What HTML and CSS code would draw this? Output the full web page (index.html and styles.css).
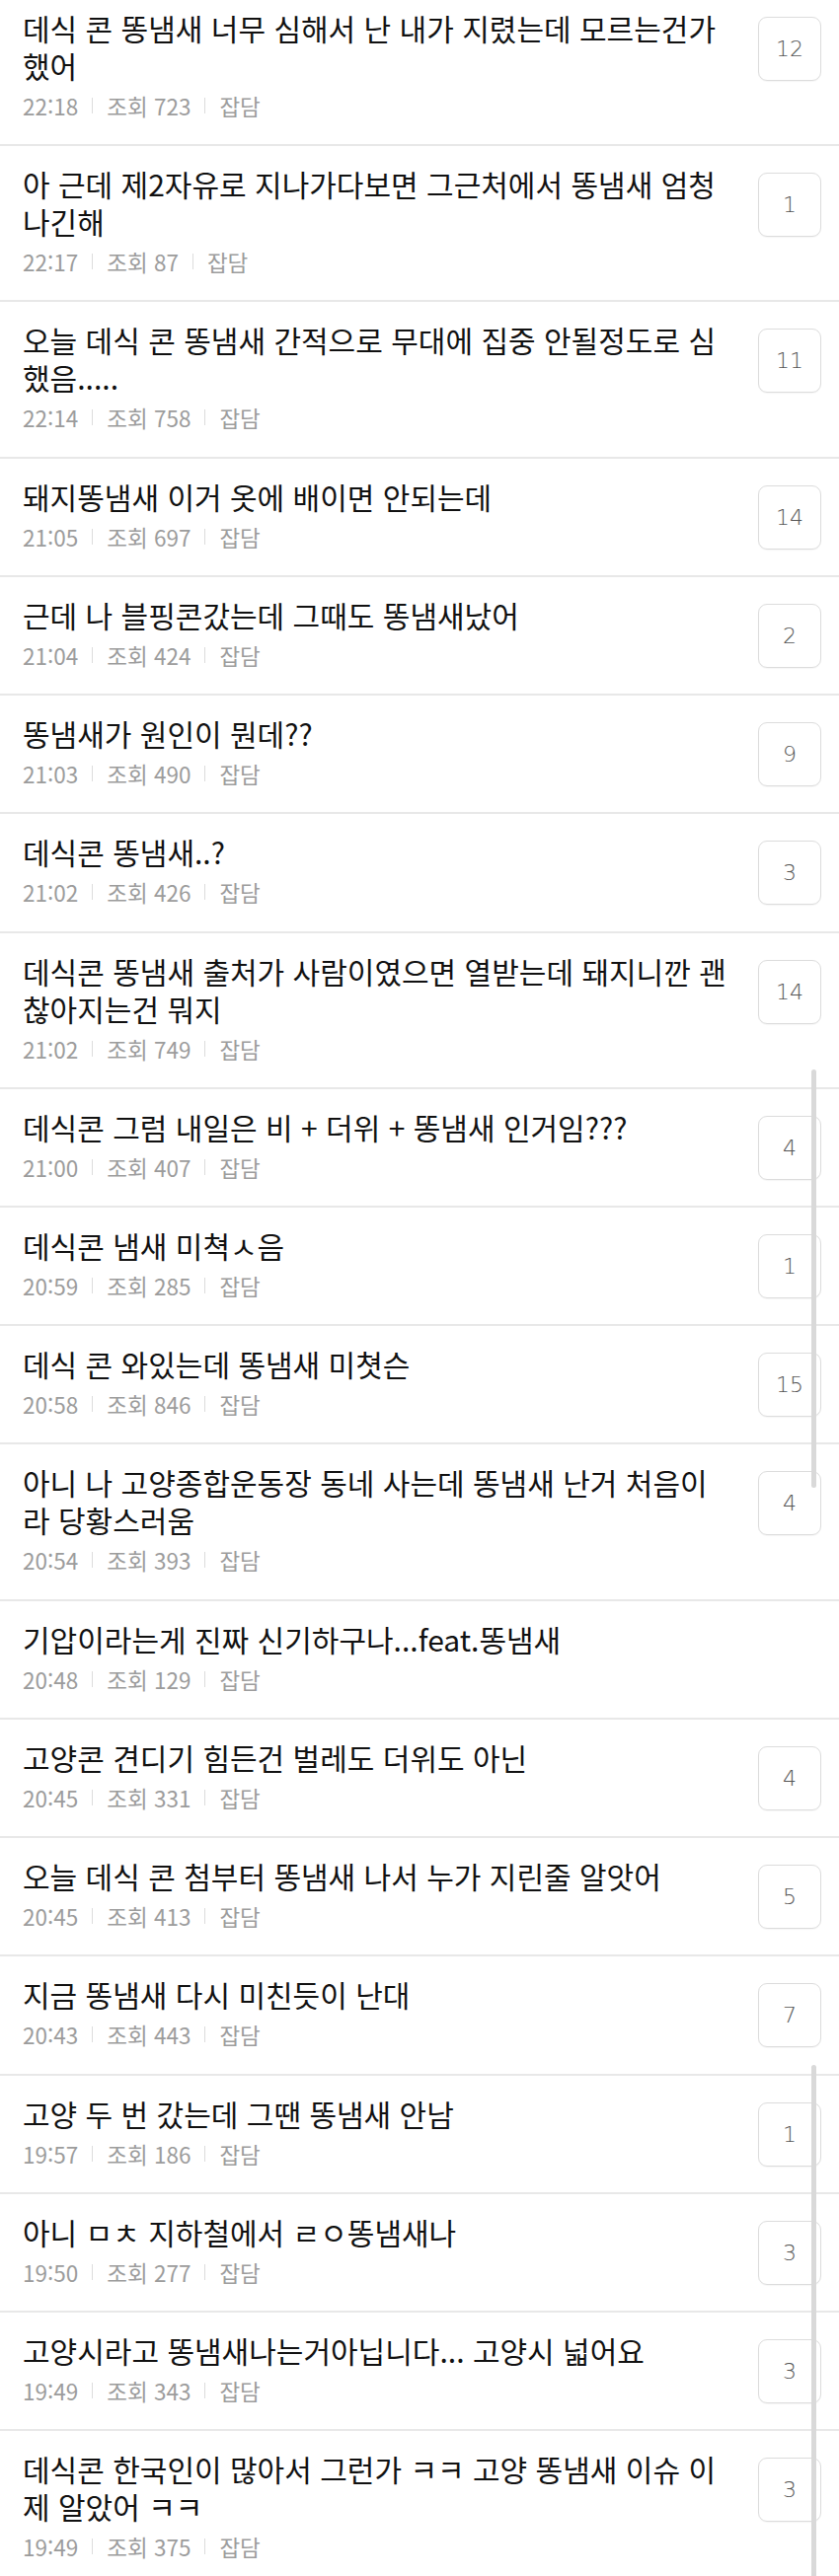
FILE: index.html
```html
<!DOCTYPE html>
<html lang="ko">
<head>
<meta charset="utf-8">
<title>게시판</title>
<link rel="stylesheet" href="styles.css">
</head>
<body>
<div class="page">
<ul class="list">
  <li class="item"><div class="body"><p class="title">데식 콘 똥냄새 너무 심해서 난 내가 지렸는데 모르는건가했어</p><div class="meta"><span>22:18</span><span class="sep"></span><span>조회 723</span><span class="sep"></span><span>잡담</span></div></div><div class="count">12</div></li>
  <li class="item"><div class="body"><p class="title">아 근데 제2자유로 지나가다보면 그근처에서 똥냄새 엄청 나긴해</p><div class="meta"><span>22:17</span><span class="sep"></span><span>조회 87</span><span class="sep"></span><span>잡담</span></div></div><div class="count">1</div></li>
  <li class="item"><div class="body"><p class="title">오늘 데식 콘 똥냄새 간적으로 무대에 집중 안될정도로 심했음.....</p><div class="meta"><span>22:14</span><span class="sep"></span><span>조회 758</span><span class="sep"></span><span>잡담</span></div></div><div class="count">11</div></li>
  <li class="item"><div class="body"><p class="title">돼지똥냄새 이거 옷에 배이면 안되는데</p><div class="meta"><span>21:05</span><span class="sep"></span><span>조회 697</span><span class="sep"></span><span>잡담</span></div></div><div class="count">14</div></li>
  <li class="item"><div class="body"><p class="title">근데 나 블핑콘갔는데 그때도 똥냄새났어</p><div class="meta"><span>21:04</span><span class="sep"></span><span>조회 424</span><span class="sep"></span><span>잡담</span></div></div><div class="count">2</div></li>
  <li class="item"><div class="body"><p class="title">똥냄새가 원인이 뭔데??</p><div class="meta"><span>21:03</span><span class="sep"></span><span>조회 490</span><span class="sep"></span><span>잡담</span></div></div><div class="count">9</div></li>
  <li class="item"><div class="body"><p class="title">데식콘 똥냄새..?</p><div class="meta"><span>21:02</span><span class="sep"></span><span>조회 426</span><span class="sep"></span><span>잡담</span></div></div><div class="count">3</div></li>
  <li class="item"><div class="body"><p class="title">데식콘 똥냄새 출처가 사람이였으면 열받는데 돼지니깐 괜찮아지는건 뭐지</p><div class="meta"><span>21:02</span><span class="sep"></span><span>조회 749</span><span class="sep"></span><span>잡담</span></div></div><div class="count">14</div></li>
  <li class="item"><div class="body"><p class="title">데식콘 그럼 내일은 비 + 더위 + 똥냄새 인거임???</p><div class="meta"><span>21:00</span><span class="sep"></span><span>조회 407</span><span class="sep"></span><span>잡담</span></div></div><div class="count">4</div></li>
  <li class="item"><div class="body"><p class="title">데식콘 냄새 미쳑ㅅ음</p><div class="meta"><span>20:59</span><span class="sep"></span><span>조회 285</span><span class="sep"></span><span>잡담</span></div></div><div class="count">1</div></li>
  <li class="item"><div class="body"><p class="title">데식 콘 와있는데 똥냄새 미쳣슨</p><div class="meta"><span>20:58</span><span class="sep"></span><span>조회 846</span><span class="sep"></span><span>잡담</span></div></div><div class="count">15</div></li>
  <li class="item"><div class="body"><p class="title">아니 나 고양종합운동장 동네 사는데 똥냄새 난거 처음이라 당황스러움</p><div class="meta"><span>20:54</span><span class="sep"></span><span>조회 393</span><span class="sep"></span><span>잡담</span></div></div><div class="count">4</div></li>
  <li class="item"><div class="body"><p class="title">기압이라는게 진짜 신기하구나...feat.똥냄새</p><div class="meta"><span>20:48</span><span class="sep"></span><span>조회 129</span><span class="sep"></span><span>잡담</span></div></div></li>
  <li class="item"><div class="body"><p class="title">고양콘 견디기 힘든건 벌레도 더위도 아닌</p><div class="meta"><span>20:45</span><span class="sep"></span><span>조회 331</span><span class="sep"></span><span>잡담</span></div></div><div class="count">4</div></li>
  <li class="item"><div class="body"><p class="title">오늘 데식 콘 첨부터 똥냄새 나서 누가 지린줄 알앗어</p><div class="meta"><span>20:45</span><span class="sep"></span><span>조회 413</span><span class="sep"></span><span>잡담</span></div></div><div class="count">5</div></li>
  <li class="item"><div class="body"><p class="title">지금 똥냄새 다시 미친듯이 난대</p><div class="meta"><span>20:43</span><span class="sep"></span><span>조회 443</span><span class="sep"></span><span>잡담</span></div></div><div class="count">7</div></li>
  <li class="item"><div class="body"><p class="title">고양 두 번 갔는데 그땐 똥냄새 안남</p><div class="meta"><span>19:57</span><span class="sep"></span><span>조회 186</span><span class="sep"></span><span>잡담</span></div></div><div class="count">1</div></li>
  <li class="item"><div class="body"><p class="title">아니 ㅁㅊ 지하철에서 ㄹㅇ똥냄새나</p><div class="meta"><span>19:50</span><span class="sep"></span><span>조회 277</span><span class="sep"></span><span>잡담</span></div></div><div class="count">3</div></li>
  <li class="item"><div class="body"><p class="title">고양시라고 똥냄새나는거아닙니다... 고양시 넓어요</p><div class="meta"><span>19:49</span><span class="sep"></span><span>조회 343</span><span class="sep"></span><span>잡담</span></div></div><div class="count">3</div></li>
  <li class="item"><div class="body"><p class="title">데식콘 한국인이 많아서 그런가 ㅋㅋ 고양 똥냄새 이슈 이제 알았어 ㅋㅋ</p><div class="meta"><span>19:49</span><span class="sep"></span><span>조회 375</span><span class="sep"></span><span>잡담</span></div></div><div class="count">3</div></li>
</ul>
<div class="scroll scroll-a"></div>
<div class="scroll scroll-b"></div>
</div>
</body>
</html>
```

FILE: styles.css
```css
html, body {
  margin: 0;
  padding: 0;
  background: #fff;
}

body {
  font-family: "Noto Sans CJK KR", "Noto Sans", sans-serif;
  color: #111;
  overflow: hidden;
}

.page {
  position: relative;
  width: 850px;
  height: 2611px;
  overflow: hidden;
}

.list {
  list-style: none;
  margin: -10px 0 0;
  padding: 0;
}

.item {
  display: flex;
  align-items: flex-start;
  gap: 29px;
  padding: 19px 18px 25.22px 23px;
  border-bottom: 2px solid #e8e8e8;
}

.body {
  flex: 1;
  min-width: 0;
}

.title {
  margin: 0;
  font-size: 30px;
  line-height: 38px;
  color: #111;
  word-break: break-all;
}

.meta {
  display: flex;
  align-items: center;
  gap: 14px;
  margin-top: 8px;
  font-size: 22.5px;
  line-height: 28px;
  color: #9c9c9c;
}

.sep {
  width: 1px;
  height: 16px;
  background: #dcdcdc;
}

.count {
  flex: none;
  box-sizing: border-box;
  width: 64px;
  height: 65px;
  margin-top: 8px;
  display: flex;
  align-items: center;
  justify-content: center;
  border: 1.5px solid #dcdcdc;
  border-radius: 9px;
  box-shadow: 0 1px 1px rgba(0, 0, 0, 0.04);
  font-family: "DejaVu Sans", sans-serif;
  font-stretch: condensed;
  font-weight: 300;
  font-size: 22px;
  color: #555;
}

.scroll {
  position: absolute;
  left: 822px;
  width: 5px;
  border-radius: 3px;
  background: #d9d9d9;
}

.scroll-a {
  top: 1084px;
  height: 424px;
}

.scroll-b {
  top: 2093px;
  height: 530px;
}
```
